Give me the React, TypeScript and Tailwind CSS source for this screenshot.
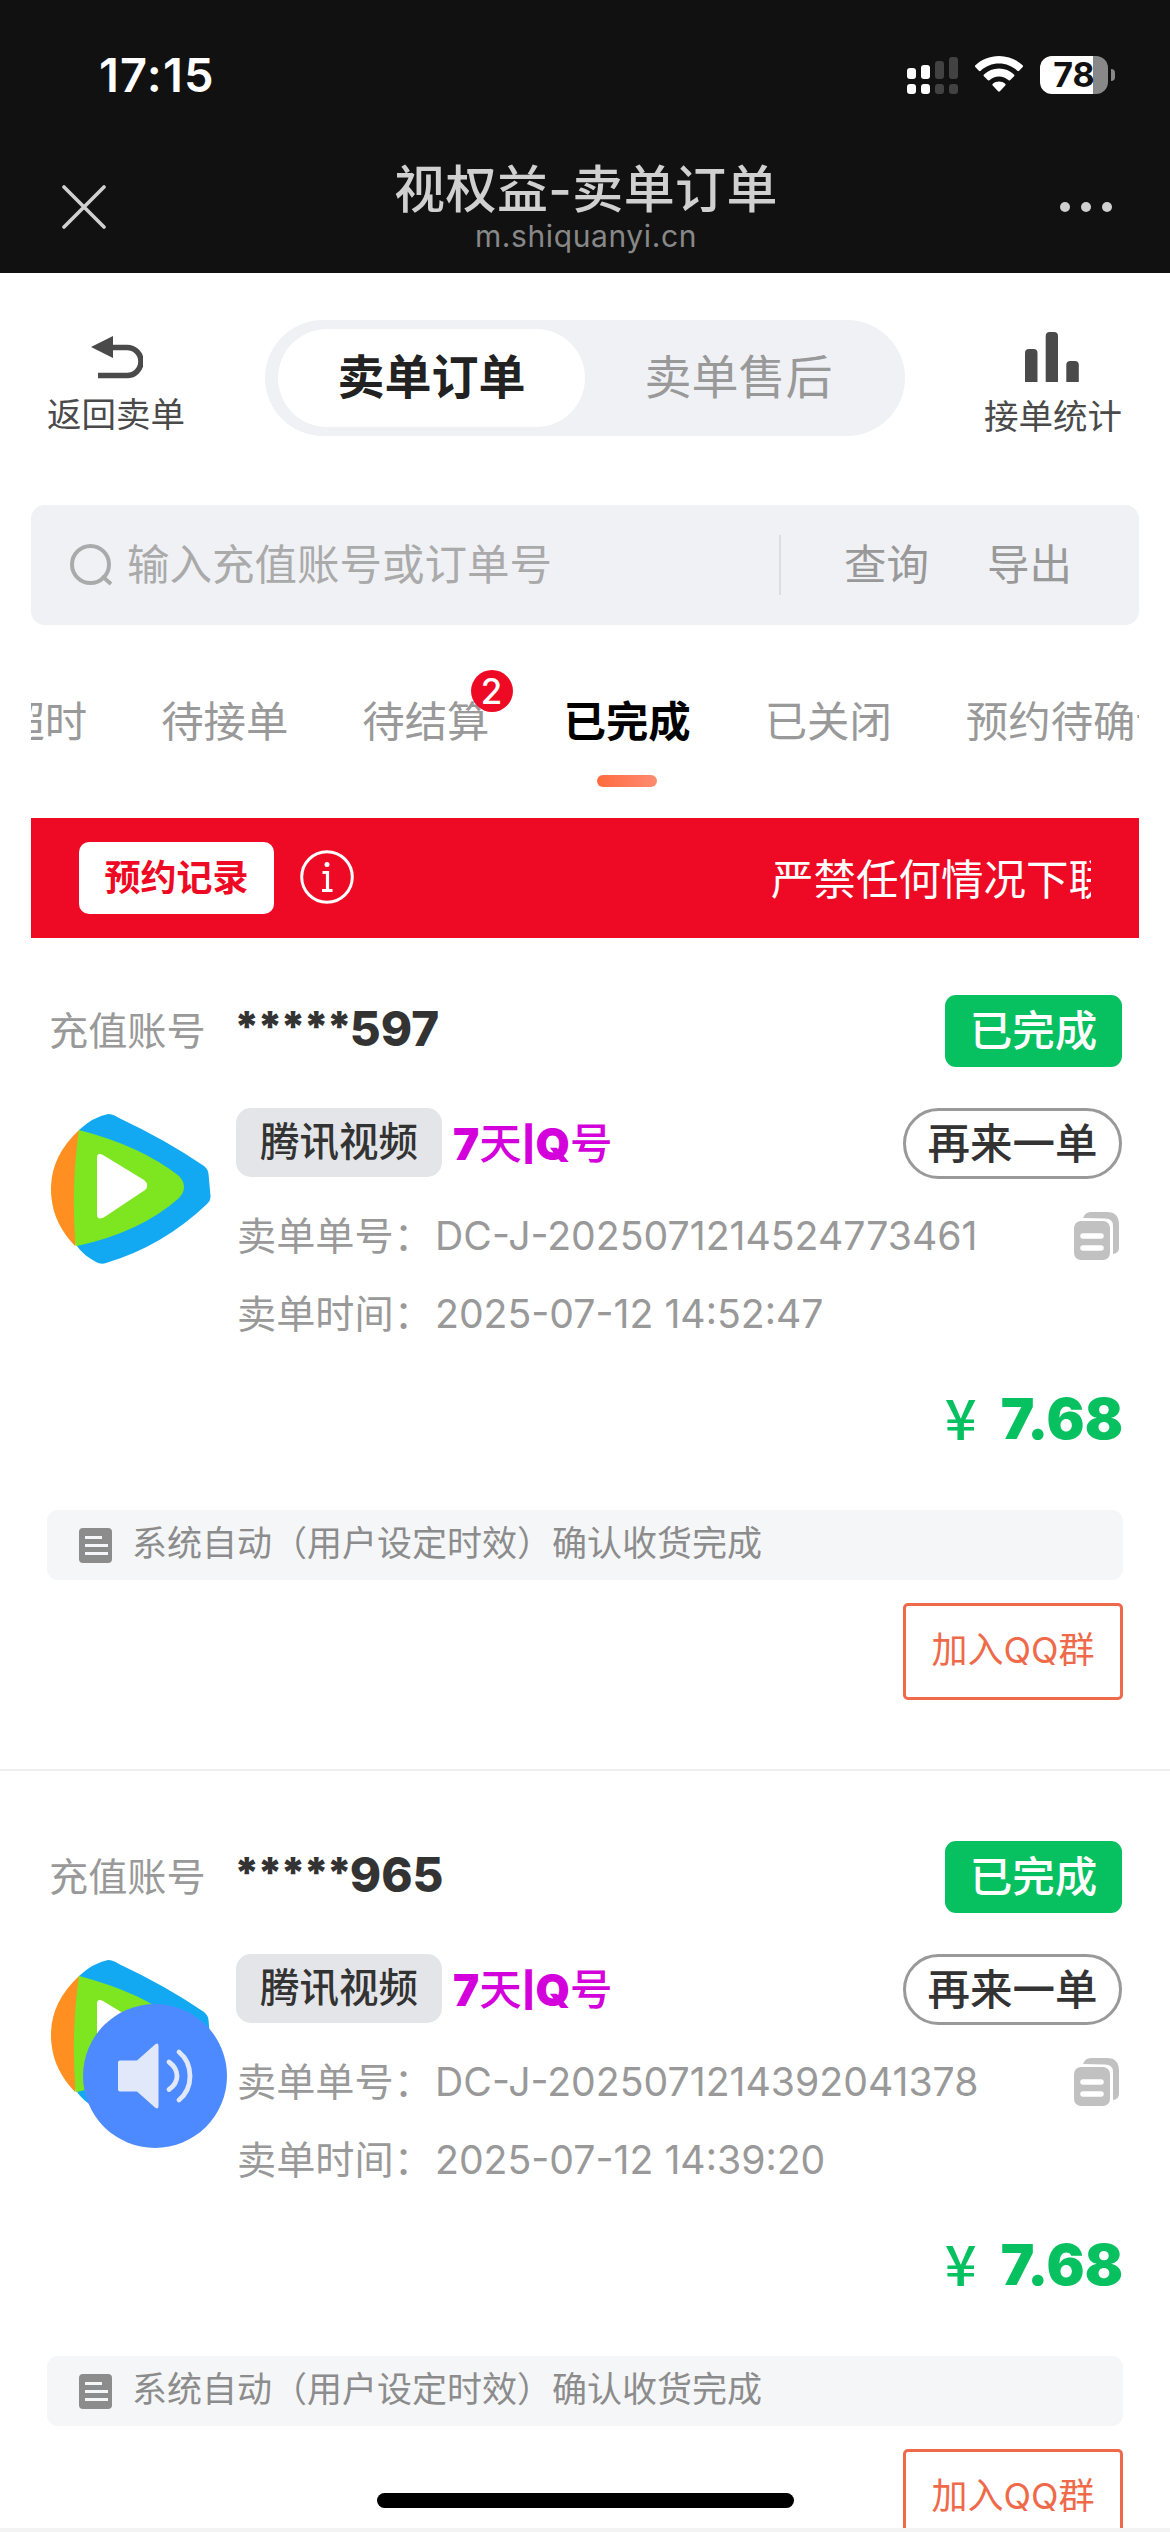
const orders = [
  {
    account: '597',
    no: 'DC-J-2025071214524773461',
    time: '2025-07-12 14:52:47',
    price: '7.68',
  },
  {
    account: '965',
    no: 'DC-J-2025071214392041378',
    time: '2025-07-12 14:39:20',
    price: '7.68',
  },
]

const tabs = [
  { label: '已超时' },
  { label: '待接单' },
  { label: '待结算', badge: 2 },
  { label: '已完成', active: true },
  { label: '已关闭' },
  { label: '预约待确认' },
]

function StatusBar() {
  return (
    <div className="flex h-[150px] items-center justify-between pl-[99px] pr-[55px]">
      <span className="pb-[2px] text-[47px] font-semibold leading-none tracking-[1.2px] text-white">17:15</span>
      <div className="flex items-center">
        <svg width="51" height="38" viewBox="0 0 51 38" fill="#fff">
          <rect x="0" y="12" width="9" height="11" rx="3" />
          <rect x="14" y="9" width="9" height="14" rx="3" />
          <rect x="28" y="5" width="9" height="18" rx="3" fill="#424242" />
          <rect x="42" y="1" width="9" height="22" rx="3" fill="#424242" />
          <rect x="0" y="28" width="9" height="10" rx="3" />
          <rect x="14" y="28" width="9" height="10" rx="3" />
          <rect x="28" y="28" width="9" height="10" rx="3" fill="#424242" />
          <rect x="42" y="28" width="9" height="10" rx="3" fill="#424242" />
        </svg>
        <svg className="ml-[17px]" width="48" height="38" viewBox="0 0 48 38" fill="#fff">
          <path d="M24 0C33 0 41.500 3.500 47.600 9.200c.6.6.6 1.200.1 1.800l-3.600 3.700c-.6.6-1.200.6-1.800.1C37.400 10.300 31 7.600 24 7.600S10.600 10.300 5.700 14.800c-.6.5-1.200.5-1.800-.1L.3 11c-.5-.6-.5-1.200.1-1.800C6.500 3.500 15 0 24 0z" />
          <path d="M24 12.600c5.800 0 11 2.200 15 5.800.6.6.6 1.200.1 1.800l-3.800 3.900c-.5.5-1.100.5-1.700.1-2.600-2.300-5.900-3.700-9.600-3.700s-7 1.400-9.600 3.700c-.6.4-1.200.4-1.700-.1L8.900 20.200c-.5-.6-.5-1.200.1-1.800 4-3.600 9.200-5.800 15-5.800z" />
          <path d="M24 25.500c2.300 0 4.500.8 6.200 2.200.6.500.6 1.200.1 1.800l-5.400 5.700c-.6.6-1.200.6-1.800 0l-5.400-5.700c-.5-.6-.5-1.300.1-1.800 1.700-1.400 3.900-2.200 6.200-2.200z" />
        </svg>
        <div className="ml-[17px] flex h-[38px] w-[68px] items-center justify-center rounded-[12px] bg-[linear-gradient(90deg,#fff_53px,#888_53px)]">
          <span className="text-[34px] font-bold leading-none text-[#111]">78</span>
        </div>
        <span className="ml-[3px] h-[12px] w-[4px] rounded-r-full bg-[#888]" />
      </div>
    </div>
  )
}

function NavBar() {
  return (
    <div className="flex h-[123px] items-start justify-between pl-[62px] pr-[58px]">
      <svg className="mt-[35px]" width="44" height="44" viewBox="0 0 44 44" stroke="#d0d0d0" strokeWidth="3.6" strokeLinecap="round">
        <path d="M2 2l40 40M42 2L2 42" />
      </svg>
      <div className="flex flex-col items-center pl-[6px] pt-[10px]">
        <h1 className="text-[51px] font-medium leading-[60px] tracking-[0.4px] text-[#d0d0d0]">视权益-卖单订单</h1>
        <p className="mt-px text-[30px] leading-[30px] tracking-[0.6px] text-[#888]">m.shiquanyi.cn</p>
      </div>
      <div className="mt-[52px] flex gap-[11px]">
        <span className="size-[10px] rounded-full bg-[#d0d0d0]" />
        <span className="size-[10px] rounded-full bg-[#d0d0d0]" />
        <span className="size-[10px] rounded-full bg-[#d0d0d0]" />
      </div>
    </div>
  )
}

function TopSwitch() {
  return (
    <div className="flex h-[232px] items-start justify-between pl-[47px] pr-[48px] pt-[47px]">
      <div className="flex w-[138px] flex-col items-center pt-[16px] text-[#4a4a4a]">
        <svg className="mr-[-1px]" width="52" height="43" viewBox="0 0 52 43" fill="none">
          <path d="M20 11.500h16a13.800 13.800 0 0 1 0 28H7" stroke="currentColor" strokeWidth="5.600" />
          <path d="M0 11L22 0v22z" fill="currentColor" />
        </svg>
        <span className="mt-[16px] text-[34.500px] leading-[40px]">返回卖单</span>
      </div>
      <div className="mr-[-1px] flex h-[116px] w-[640px] items-center rounded-full bg-[#f0f1f5] px-[13px] text-[47px]">
        <div className="flex h-[98px] w-[307px] items-center justify-center rounded-full bg-white pb-[2px] font-bold text-[#222]">
          卖单订单
        </div>
        <div className="flex flex-1 items-center justify-center pb-[2px] text-[#999]">卖单售后</div>
      </div>
      <div className="flex w-[138px] flex-col items-center pt-[12px] text-[#4a4a4a]">
        <svg className="mr-[3px]" width="54" height="50" viewBox="0 0 54 50" fill="currentColor">
          <path d="M0 50V21q0-4 4-4h4.500q4 0 4 4v29zM20.700 50V4q0-4 4-4h4.300q4 0 4 4v46zM41.300 50V33q0-4 4-4h4.500q4 0 4 4v17z" />
        </svg>
        <span className="mt-[15px] text-[34.500px] leading-[40px]">接单统计</span>
      </div>
    </div>
  )
}

function SearchBar() {
  return (
    <div className="mx-[31px] flex h-[120px] items-center rounded-[14px] bg-[#f0f1f5] pl-[39px] text-[42.500px] leading-none">
      <svg width="43" height="42" viewBox="0 0 43 42" fill="none" stroke="#aaa" strokeWidth="4">
        <circle cx="20.500" cy="20.500" r="18.500" />
        <path d="M32 32l9 8" />
      </svg>
      <span className="ml-[14px] w-[652px] text-[#aaa]">输入充值账号或订单号</span>
      <span className="h-[60px] w-[2px] bg-[#dcdde0]" />
      <span className="ml-[63px] text-[#999]">查询</span>
      <span className="ml-[58px] text-[#999]">导出</span>
    </div>
  )
}

function Tabs() {
  return (
    <div className="mx-[31px] flex h-[193px] overflow-hidden">
      <div className="-ml-[71px] flex shrink-0 gap-[74px] pt-[70px] text-[42.400px] leading-[54px] text-[#999]">
        {tabs.map((tab) => (
          <div key={tab.label} className="relative shrink-0 whitespace-nowrap">
            <span className={tab.active ? 'font-bold text-black' : ''}>{tab.label}</span>
            {tab.active && (
              <span className="mx-auto mt-[26px] block h-[12px] w-[60px] rounded-[6px] bg-gradient-to-r from-[#ff6a3d] to-[#ff8b70]" />
            )}
            {tab.badge && (
              <span className="absolute -right-[23px] -top-[25px] flex size-[42px] items-center justify-center rounded-full bg-[#ee0a24] text-[35px] font-medium leading-none text-white">
                {tab.badge}
              </span>
            )}
          </div>
        ))}
      </div>
    </div>
  )
}

function Notice() {
  return (
    <div className="mx-[31px] flex h-[120px] items-center bg-[#ee0a24] pl-[48px] pr-[48px]">
      <span className="flex h-[72px] w-[195px] items-center justify-center rounded-[10px] bg-white pb-px text-[36px] font-bold text-[#ee0a24]">
        预约记录
      </span>
      <svg className="mb-[3px] ml-[26px]" width="54" height="54" viewBox="0 0 54 54" fill="none" stroke="#fff" strokeWidth="3">
        <circle cx="27" cy="27" r="25.300" />
        <path d="M22.500 22.500h5v18M22 40.500h10.500" strokeWidth="3.200" />
        <circle cx="27" cy="14.500" r="2.500" fill="#fff" stroke="none" />
      </svg>
      <div className="ml-auto w-[320px] overflow-hidden whitespace-nowrap pt-[4px] text-[42.500px] leading-[60px] text-white">
        严禁任何情况下联系
      </div>
    </div>
  )
}

function VideoLogo() {
  return (
    <svg width="160" height="150" viewBox="0 0 160 150">
      <path d="M28 16Q42 3 57 0Q62 0 68 4Q115 26 153 52Q157 55 157.500 60L159.500 82Q160 86 156 90Q112 132 55 149Q50 151 45 148Q32 141 26 132z" fill="#12a9f2" />
      <path d="M28 16Q-4 46 .5 84Q3 110 24 132L34 90V30z" fill="#ff8f21" />
      <path d="M28 16Q90 32 128 62Q138 73 128 84Q90 118 26 132L24.500 132Q20 70 28 16z" fill="#7de621" />
      <path d="M46 44Q46 38 52 41L93 66Q99 71 94 76L55 102Q46 108 46 100z" fill="#fff" />
    </svg>
  )
}

function CopyIcon() {
  return (
    <svg width="45" height="48" viewBox="0 0 45 48">
      <path d="M9 6Q11 0 17 0H33Q45 0 45 13V36Q45 41 39 42V14Q39 6.500 31 6.500z" fill="#c1c1c1" />
      <rect x="0" y="9" width="36" height="39" rx="7" fill="#c1c1c1" />
      <path d="M9 24h18M9 36h18" stroke="#fff" strokeWidth="5.500" strokeLinecap="round" />
    </svg>
  )
}

function Order({ order }: { order: (typeof orders)[number] }) {
  return (
    <div className="h-[846px] shrink-0 pl-[47px] pr-[47px] pt-[57px]">
      <div className="flex h-[72px] items-center">
        <span className="ml-[2px] w-[185px] text-[39.200px] text-[#999]">充值账号</span>
        <span className="pb-[4px] text-[47.500px] font-extrabold leading-[68px] text-[#333]">
          <span className="align-[4px] text-[42px] font-black leading-none tracking-[-2.400px]">*****</span>
          {order.account}
        </span>
        <span className="ml-auto mr-px flex h-[72px] w-[177px] items-center justify-center rounded-[11px] bg-[#07c160] text-[42.500px] font-medium text-white">
          已完成
        </span>
      </div>

      <div className="mt-[41px] flex">
        <div className="w-[189px] pl-[4px] pt-[6px]">
          <VideoLogo />
        </div>
        <div className="flex-1">
          <div className="flex h-[71px] items-center">
            <span className="mb-[2px] flex h-[69px] w-[206px] items-center justify-center rounded-[15px] bg-[#e4e5e8] text-[39.500px] font-medium text-[#333]">
              腾讯视频
            </span>
            <span className="ml-[11px] flex items-center text-[42.500px] font-medium text-[#d400dc]">
              <span className="text-[44px] font-black">7</span>天
              <span className="text-[34px] font-black">|</span>
              <span className="text-[44px] font-black">Q</span>号
            </span>
            <span className="ml-auto mr-px flex h-[71px] w-[219px] items-center justify-center rounded-full border-[3px] border-[#999] text-[42.500px] font-medium text-[#333]">
              再来一单
            </span>
          </div>
          <div className="mt-[18px] flex h-[78px] items-center text-[39.200px] text-[#999]">
            <span className="ml-px w-[198px] whitespace-nowrap">卖单单号：</span>
            <span>{order.no}</span>
            <span className="ml-auto mr-[4px]">
              <CopyIcon />
            </span>
          </div>
          <div className="flex h-[78px] items-center text-[39.200px] text-[#999]">
            <span className="ml-px w-[198px] whitespace-nowrap">卖单时间：</span>
            <span>{order.time}</span>
          </div>
        </div>
      </div>

      <div className="mt-[31px] flex h-[70px] items-center justify-end text-[#07c160]">
        <span className="mb-[6px] mr-[24px] font-['Noto_Sans_CJK_SC',sans-serif] text-[56px] font-medium leading-[70px]">¥</span>
        <span className="text-[56.500px] font-black leading-[70px]">{order.price}</span>
      </div>

      <div className="mt-[56px] flex h-[70px] items-center rounded-[11px] bg-[#f5f6f8] pl-[32px] text-[35px] text-[#8c8c8c]">
        <svg width="33" height="35" viewBox="0 0 33 35">
          <rect width="33" height="35" rx="4" fill="#8c8c8c" />
          <path d="M6 9.500h17M6 17.500h23M6 25.500h23" stroke="#f5f6f8" strokeWidth="3" />
        </svg>
        <span className="ml-[20px] pb-[3px]">系统自动（用户设定时效）确认收货完成</span>
      </div>

      <div className="mt-[23px] flex justify-end">
        <span className="flex h-[97px] w-[220px] items-center justify-center rounded-[5px] border-[3px] border-[#ee6a4a] pb-[3px] text-[36px] text-[#ee6a4a]">
          加入QQ群
        </span>
      </div>
    </div>
  )
}

function SpeakerButton() {
  return (
    <div className="absolute left-[83px] top-[2004px] flex size-[144px] items-center justify-center rounded-full bg-[#4e8aff]">
      <svg width="76" height="66" viewBox="0 0 76 66" fill="none">
        <path d="M2 17.500h18L38 1.500q3.500-2.500 3.500 1.500v60q0 4-3.500 1.500L20 48.500H3q-2 0-2-2v-27q0-2 2-2z" fill="#e0e8fa" />
        <path d="M52 19q8 6 8 14t-8 13.500M62 9q11 9 11 24T62 57" stroke="#e0e8fa" strokeWidth="4.800" strokeLinecap="round" />
      </svg>
    </div>
  )
}

export default function App() {
  return (
    <div className="relative flex h-[2532px] w-[1170px] flex-col overflow-hidden bg-[#f3f3f3] font-[Inter,'Noto_Sans_CJK_SC',sans-serif]">
      <header className="shrink-0 bg-[#111]">
        <StatusBar />
        <NavBar />
      </header>
      <main className="h-[2255px] shrink-0 overflow-hidden bg-white">
        <TopSwitch />
        <SearchBar />
        <Tabs />
        <Notice />
        {orders.map((order, i) => (
          <div key={order.no} className={i > 0 ? 'shadow-[0_-13px_0_#fff,0_-15px_0_#eee]' : ''}>
            <Order order={order} />
          </div>
        ))}
      </main>
      <SpeakerButton />
      <div className="absolute left-[377px] top-[2493px] h-[15px] w-[417px] rounded-full bg-black" />
    </div>
  )
}
